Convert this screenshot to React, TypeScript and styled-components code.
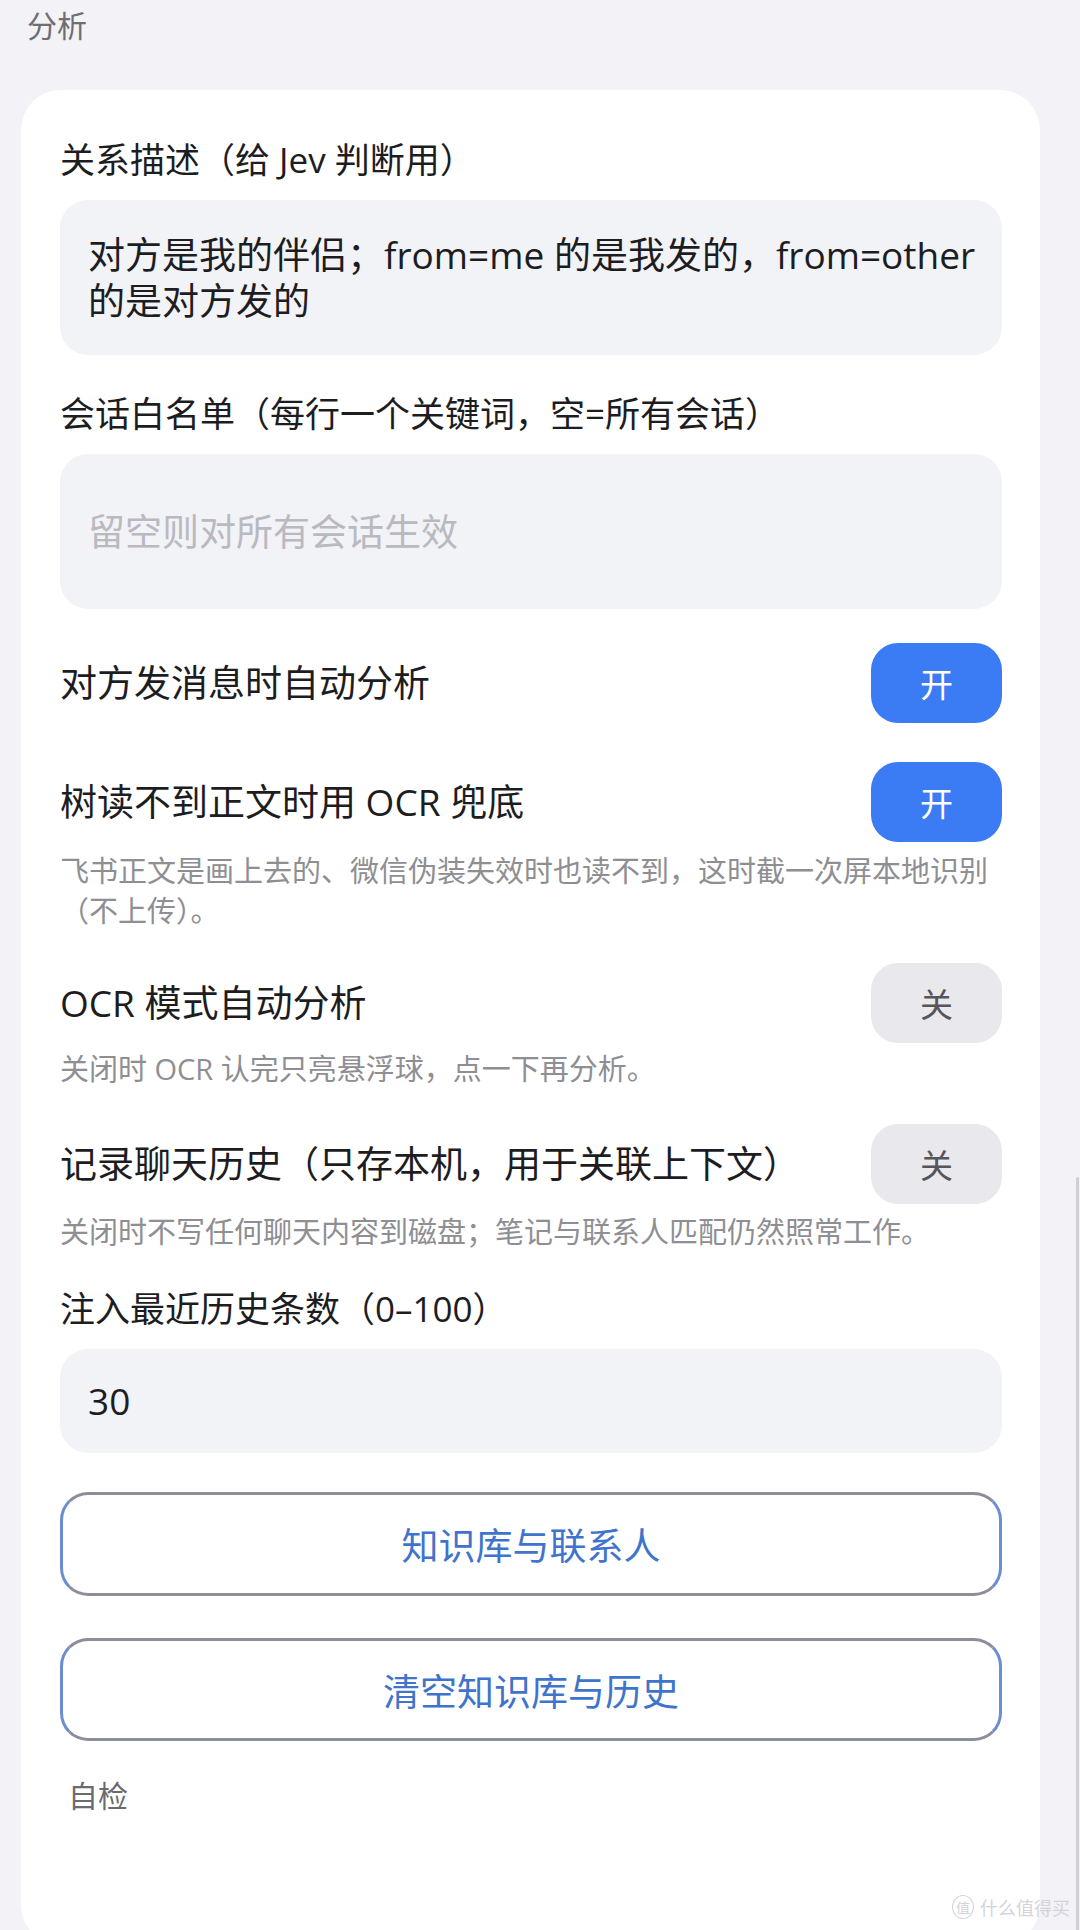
import React from "react";
import styled, { createGlobalStyle } from "styled-components";

const GlobalStyle = createGlobalStyle`
  html, body {
    margin: 0;
    padding: 0;
    background: #f2f2f7;
  }
  body {
    width: 1080px;
    height: 1930px;
    overflow: hidden;
    font-family: "Open Sans", "Noto Sans CJK SC", sans-serif;
    -webkit-font-smoothing: antialiased;
  }
`;

const Page = styled.div`
  position: relative;
  width: 1080px;
  height: 1930px;
  box-sizing: border-box;
  padding: 6px 40px 0 21px;
  display: flex;
  flex-direction: column;
  overflow: hidden;
`;

const PageHeader = styled.div`
  flex-shrink: 0;
  margin-left: 6px;
  font-size: 30px;
  line-height: 40px;
  color: #6e6e73;
`;

const Card = styled.div`
  flex-shrink: 0;
  margin-top: 44px;
  background: #ffffff;
  border-radius: 40px;
  padding: 48px 38px 0 39px;
  display: flex;
  flex-direction: column;
  min-height: 1855px;
  box-sizing: border-box;
  & > * {
    flex-shrink: 0;
  }
`;

const Field = styled.div<{ $mt?: number }>`
  display: flex;
  flex-direction: column;
  margin-top: ${(p) => p.$mt ?? 0}px;
`;

const FieldLabel = styled.div`
  font-size: 35px;
  line-height: 44px;
  color: #1d1d1f;
  margin-bottom: 18px;
`;

const InputBox = styled.div<{ $h: number; $placeholder?: boolean }>`
  min-height: ${(p) => p.$h}px;
  box-sizing: border-box;
  background: #f2f3f7;
  border-radius: 28px;
  padding: 0 12px 0 28px;
  display: flex;
  align-items: center;
  font-size: 37px;
  line-height: 46px;
  color: ${(p) => (p.$placeholder ? "#b9b9bf" : "#1d1d1f")};
`;

const Setting = styled.div<{ $mt: number }>`
  display: flex;
  flex-direction: column;
  margin-top: ${(p) => p.$mt}px;
`;

const ToggleRow = styled.div`
  display: flex;
  align-items: center;
  justify-content: space-between;
  height: 80px;
`;

const ToggleTitle = styled.div`
  font-size: 37px;
  line-height: 46px;
  color: #1d1d1f;
`;

const ToggleButton = styled.div<{ $on: boolean }>`
  width: 131px;
  height: 80px;
  border-radius: 27px;
  flex-shrink: 0;
  display: flex;
  align-items: center;
  justify-content: center;
  font-size: 33px;
  background: ${(p) => (p.$on ? "#3b7bf4" : "#e8e8ed")};
  color: ${(p) => (p.$on ? "#ffffff" : "#55555a")};
`;

const Hint = styled.div<{ $mt: number }>`
  margin-top: ${(p) => p.$mt}px;
  font-size: 29px;
  line-height: 40px;
  color: #8e8e93;
`;

const OutlineButton = styled.div<{ $mt: number; $h: number }>`
  margin-top: ${(p) => p.$mt}px;
  height: ${(p) => p.$h}px;
  box-sizing: border-box;
  border: 3px solid;
  border-color: #8c8f97 #6c8ed0 #8c8f97 #6c8ed0;
  border-radius: 28px;
  display: flex;
  align-items: center;
  justify-content: center;
  font-size: 37px;
  color: #3f74cc;
`;

const SectionTitle = styled.div`
  margin-top: 35px;
  margin-left: 8px;
  font-size: 30px;
  line-height: 40px;
  color: #6a6a6f;
`;

const ScrollBar = styled.div`
  position: absolute;
  right: 1px;
  top: 1177px;
  width: 3px;
  height: 760px;
  background: #cfcfd4;
  border-radius: 2px;
`;

const Watermark = styled.div`
  position: absolute;
  right: 10px;
  bottom: 10px;
  display: flex;
  align-items: center;
  gap: 6px;
  font-size: 18px;
  color: #d4d4d8;
`;

const WatermarkBadge = styled.span`
  width: 20px;
  height: 22px;
  border: 1.5px solid #d4d4d8;
  border-radius: 50%;
  display: flex;
  align-items: center;
  justify-content: center;
  font-size: 14px;
`;

type ToggleProps = { title: string; on: boolean; mt: number; hint?: string; hintMt?: number };

const ToggleSetting = ({ title, on, mt, hint, hintMt }: ToggleProps) => (
  <Setting $mt={mt}>
    <ToggleRow>
      <ToggleTitle>{title}</ToggleTitle>
      <ToggleButton $on={on}>{on ? "开" : "关"}</ToggleButton>
    </ToggleRow>
    {hint && <Hint $mt={hintMt ?? 8}>{hint}</Hint>}
  </Setting>
);

export default function App() {
  return (
    <>
      <GlobalStyle />
      <Page>
        <PageHeader>分析</PageHeader>
        <Card>
          <Field>
            <FieldLabel>关系描述（给 Jev 判断用）</FieldLabel>
            <InputBox $h={155}>对方是我的伴侣；from=me 的是我发的，from=other 的是对方发的</InputBox>
          </Field>
          <Field $mt={37}>
            <FieldLabel>会话白名单（每行一个关键词，空=所有会话）</FieldLabel>
            <InputBox $h={155} $placeholder>留空则对所有会话生效</InputBox>
          </Field>
          <ToggleSetting title="对方发消息时自动分析" on mt={34} />
          <ToggleSetting
            title="树读不到正文时用 OCR 兜底"
            on
            mt={39}
            hint="飞书正文是画上去的、微信伪装失效时也读不到，这时截一次屏本地识别（不上传）。"
            hintMt={9}
          />
          <ToggleSetting
            title="OCR 模式自动分析"
            on={false}
            mt={32}
            hint="关闭时 OCR 认完只亮悬浮球，点一下再分析。"
            hintMt={6}
          />
          <ToggleSetting
            title="记录聊天历史（只存本机，用于关联上下文）"
            on={false}
            mt={35}
            hint="关闭时不写任何聊天内容到磁盘；笔记与联系人匹配仍然照常工作。"
            hintMt={8}
          />
          <Field $mt={35}>
            <FieldLabel>注入最近历史条数（0–100）</FieldLabel>
            <InputBox $h={104}>30</InputBox>
          </Field>
          <OutlineButton $mt={39} $h={104}>知识库与联系人</OutlineButton>
          <OutlineButton $mt={42} $h={103}>清空知识库与历史</OutlineButton>
          <SectionTitle>自检</SectionTitle>
        </Card>
        <ScrollBar />
        <Watermark>
          <WatermarkBadge>值</WatermarkBadge>
          什么值得买
        </Watermark>
      </Page>
    </>
  );
}
